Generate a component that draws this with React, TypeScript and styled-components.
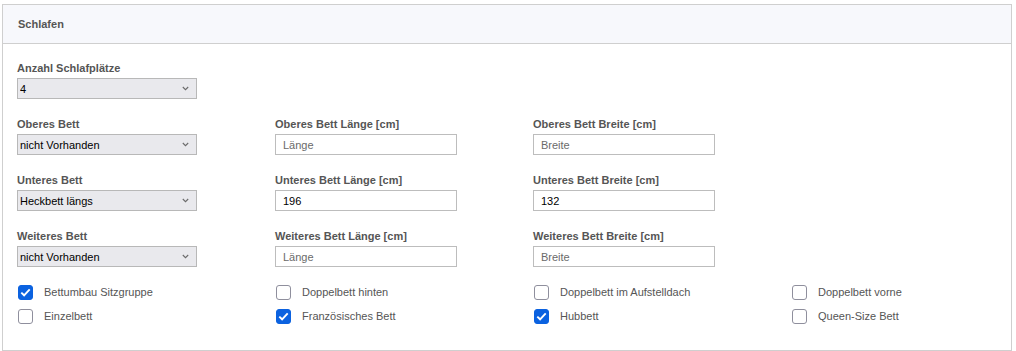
import { useState } from "react";
import styled, { createGlobalStyle } from "styled-components";

const Global = createGlobalStyle`
  body {
    margin: 0;
    background: #ffffff;
    font-family: "Liberation Sans", Arial, sans-serif;
  }
`;

const Page = styled.div`
  padding: 4px 4px 0 2px;
`;

const Card = styled.section`
  border: 1px solid #cfcfcf;
  background: #ffffff;
`;

const Header = styled.div`
  height: 38px;
  background: #f7f8fc;
  border-bottom: 1px solid #cfcfcf;
  display: flex;
  align-items: center;
  padding: 0 15px;
`;

const Title = styled.h3`
  margin: 0;
  font-size: 11px;
  font-weight: 700;
  color: #555555;
`;

const Body = styled.div`
  padding: 17px 14px 22px;
`;

const Grid = styled.div`
  display: grid;
  grid-template-columns: repeat(4, 258px);
  row-gap: 18px;
`;

const Group = styled.div`
  display: flex;
  flex-direction: column;
`;

const Label = styled.label`
  font-size: 11px;
  line-height: 14px;
  font-weight: 700;
  color: #555555;
  margin-bottom: 3px;
`;

const SelectWrap = styled.div`
  position: relative;
  width: 180px;
`;

const Select = styled.select`
  appearance: none;
  width: 180px;
  height: 21px;
  margin: 0;
  padding: 0 20px 0 2px;
  border: 1px solid #b8b8b8;
  background: #e9e9ed;
  font-family: inherit;
  font-size: 11px;
  color: #000000;
`;

const Chevron = styled.svg`
  position: absolute;
  right: 8px;
  top: 8px;
  pointer-events: none;
`;

const Input = styled.input`
  box-sizing: border-box;
  width: 182px;
  height: 21px;
  margin: 0;
  padding: 0 7px;
  border: 1px solid #bdbdbd;
  font-family: inherit;
  font-size: 11px;
  color: #000000;
  &::placeholder {
    color: #6a6a6a;
    opacity: 1;
  }
`;

const Checks = styled.div`
  display: grid;
  grid-template-columns: repeat(4, 258px);
  grid-auto-rows: 24px;
  margin-top: 13px;
  padding-left: 1px;
`;

const CheckRow = styled.label`
  display: flex;
  align-items: center;
  gap: 11px;
  font-size: 11px;
  color: #555555;
  cursor: pointer;
`;

const Box = styled.span<{ $on: boolean }>`
  box-sizing: border-box;
  width: 15px;
  height: 15px;
  border-radius: 3px;
  border: 1px solid ${({ $on }) => ($on ? "#0b62e0" : "#8f8f9d")};
  background: ${({ $on }) => ($on ? "#0b62e0" : "#ffffff")};
  display: flex;
  align-items: center;
  justify-content: center;
`;

const Hidden = styled.input`
  display: none;
`;

function Dropdown({ value, options }: { value: string; options: string[] }) {
  return (
    <SelectWrap>
      <Select defaultValue={value}>
        {options.map((o) => (
          <option key={o}>{o}</option>
        ))}
      </Select>
      <Chevron width="7" height="5" viewBox="0 0 7 5">
        <path d="M0.8 1 L3.5 3.7 L6.2 1" fill="none" stroke="#6b6b6b" strokeWidth="1.1" />
      </Chevron>
    </SelectWrap>
  );
}

const bedOptions = ["nicht Vorhanden", "Heckbett längs", "Heckbett quer", "Alkoven"];

type Row = { name: string; bed: string; len: string; wid: string };

const rows: Row[] = [
  { name: "Oberes", bed: "nicht Vorhanden", len: "", wid: "" },
  { name: "Unteres", bed: "Heckbett längs", len: "196", wid: "132" },
  { name: "Weiteres", bed: "nicht Vorhanden", len: "", wid: "" },
];

const initialChecks: [string, boolean][] = [
  ["Bettumbau Sitzgruppe", true],
  ["Doppelbett hinten", false],
  ["Doppelbett im Aufstelldach", false],
  ["Doppelbett vorne", false],
  ["Einzelbett", false],
  ["Französisches Bett", true],
  ["Hubbett", true],
  ["Queen-Size Bett", false],
];

export default function App() {
  const [checks, setChecks] = useState(initialChecks);

  const toggle = (i: number) =>
    setChecks((c) => c.map((x, j) => (j === i ? [x[0], !x[1]] : x)));

  return (
    <Page>
      <Global />
      <Card>
        <Header>
          <Title>Schlafen</Title>
        </Header>
        <Body>
          <Grid>
            <Group style={{ gridColumn: "1 / span 4" }}>
              <Label>Anzahl Schlafplätze</Label>
              <Dropdown value="4" options={["1", "2", "3", "4", "5", "6"]} />
            </Group>
            {rows.map((r) => (
              <>
                <Group key={r.name + "b"}>
                  <Label>{r.name} Bett</Label>
                  <Dropdown value={r.bed} options={bedOptions} />
                </Group>
                <Group key={r.name + "l"}>
                  <Label>{r.name} Bett Länge [cm]</Label>
                  <Input placeholder="Länge" defaultValue={r.len} />
                </Group>
                <Group key={r.name + "w"}>
                  <Label>{r.name} Bett Breite [cm]</Label>
                  <Input placeholder="Breite" defaultValue={r.wid} />
                </Group>
                <div key={r.name + "e"} />
              </>
            ))}
          </Grid>
          <Checks>
            {checks.map(([label, on], i) => (
              <CheckRow key={label}>
                <Hidden type="checkbox" checked={on} onChange={() => toggle(i)} />
                <Box $on={on}>
                  {on && (
                    <svg width="11" height="9" viewBox="0 0 11 9">
                      <path d="M1.3 4.6 L4.1 7.3 L9.7 1.4" fill="none" stroke="#ffffff" strokeWidth="1.9" />
                    </svg>
                  )}
                </Box>
                {label}
              </CheckRow>
            ))}
          </Checks>
        </Body>
      </Card>
    </Page>
  );
}
